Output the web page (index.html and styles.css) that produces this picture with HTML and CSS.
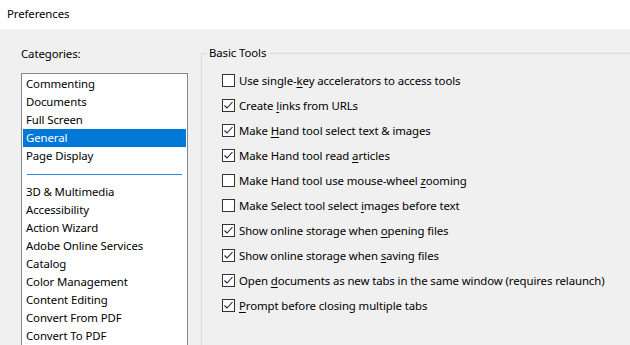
FILE: index.html
```html
<!DOCTYPE html>
<html>
<head>
<meta charset="utf-8">
<link rel="stylesheet" href="styles.css">
</head>
<body>
<div class="titlebar">Preferences</div>
<div class="content">
  <div class="left">
    <div class="cat-label">Categories:</div>
    <div class="list">
      <div class="item">Commenting</div>
      <div class="item">Documents</div>
      <div class="item">Full Screen</div>
      <div class="item selected">General</div>
      <div class="item">Page Display</div>
      <div class="sep"><div class="sep-line"></div></div>
      <div class="item">3D &amp; Multimedia</div>
      <div class="item">Accessibility</div>
      <div class="item">Action Wizard</div>
      <div class="item">Adobe Online Services</div>
      <div class="item">Catalog</div>
      <div class="item">Color Management</div>
      <div class="item">Content Editing</div>
      <div class="item">Convert From PDF</div>
      <div class="item">Convert To PDF</div>
    </div>
  </div>
  <fieldset class="group">
    <legend class="group-title">Basic Tools</legend>
    <div class="row"><span class="cb"></span><span class="lbl">Use single-<u>k</u>ey accelerators to access tools</span></div>
    <div class="row"><span class="cb checked"><svg viewBox="0 0 13 13" width="13" height="13"><path d="M2.5 6.5 L5 9 L10.5 3" fill="none" stroke="#222" stroke-width="1.1"/></svg></span><span class="lbl">Create <u>l</u>inks from URLs</span></div>
    <div class="row"><span class="cb checked"><svg viewBox="0 0 13 13" width="13" height="13"><path d="M2.5 6.5 L5 9 L10.5 3" fill="none" stroke="#222" stroke-width="1.1"/></svg></span><span class="lbl">Make <u>H</u>and tool select text &amp; images</span></div>
    <div class="row"><span class="cb checked"><svg viewBox="0 0 13 13" width="13" height="13"><path d="M2.5 6.5 L5 9 L10.5 3" fill="none" stroke="#222" stroke-width="1.1"/></svg></span><span class="lbl">Make Hand tool read <u>a</u>rticles</span></div>
    <div class="row"><span class="cb"></span><span class="lbl">Make Hand tool use mouse-wheel <u>z</u>ooming</span></div>
    <div class="row"><span class="cb"></span><span class="lbl">Make Select tool select <u>i</u>mages before text</span></div>
    <div class="row"><span class="cb checked"><svg viewBox="0 0 13 13" width="13" height="13"><path d="M2.5 6.5 L5 9 L10.5 3" fill="none" stroke="#222" stroke-width="1.1"/></svg></span><span class="lbl">Show online storage when <u>o</u>pening files</span></div>
    <div class="row"><span class="cb checked"><svg viewBox="0 0 13 13" width="13" height="13"><path d="M2.5 6.5 L5 9 L10.5 3" fill="none" stroke="#222" stroke-width="1.1"/></svg></span><span class="lbl">Show online storage when <u>s</u>aving files</span></div>
    <div class="row"><span class="cb checked"><svg viewBox="0 0 13 13" width="13" height="13"><path d="M2.5 6.5 L5 9 L10.5 3" fill="none" stroke="#222" stroke-width="1.1"/></svg></span><span class="lbl">Open <u>d</u>ocuments as new tabs in the same window (requires relaunch)</span></div>
    <div class="row"><span class="cb checked"><svg viewBox="0 0 13 13" width="13" height="13"><path d="M2.5 6.5 L5 9 L10.5 3" fill="none" stroke="#222" stroke-width="1.1"/></svg></span><span class="lbl"><u>P</u>rompt before closing multiple tabs</span></div>
  </fieldset>
</div>
</body>
</html>
```
FILE: styles.css
```css
html, body {
  margin: 0;
  padding: 0;
}
body {
  width: 630px;
  height: 345px;
  overflow: hidden;
  background: #f0f0f0;
  font-family: "Noto Sans", "Open Sans", sans-serif;
  font-size: 11.4px;
  letter-spacing: -0.1px;
  color: #000;
}
.titlebar {
  height: 29px;
  line-height: 28px;
  background: #fff;
  padding-left: 7px;
}
.content {
  display: flex;
  align-items: flex-start;
  padding-left: 21px;
  height: 316px;
  overflow: hidden;
}
.left {
  width: 167px;
  flex: none;
}
.cat-label {
  height: 16px;
  line-height: 16px;
  margin-top: 17px;
  margin-bottom: 11px;
}
.list {
  background: #fff;
  border: 1px solid #828790;
  padding: 1px 1px 0;
  height: 300px;
}
.item {
  height: 18px;
  line-height: 18px;
  padding-left: 3px;
  white-space: nowrap;
}
.item.selected {
  background: #0078d7;
  color: #fff;
}
.sep {
  height: 18px;
  display: flex;
  align-items: center;
  padding: 0 4px 0 4px;
}
.sep-line {
  flex: 1;
  height: 1px;
  background: #2b86d4;
}
.group {
  margin: 16px 0 0 13px;
  padding: 7px 0 0 20px;
  border: 1px solid #dcdcdc;
  border-right: none;
  min-width: 0;
  flex: 1;
  height: 320px;
}
.group-title {
  padding: 0 2px;
  margin-left: -15px;
  line-height: 16px;
}
.row {
  height: 25px;
  display: flex;
  align-items: center;
  white-space: nowrap;
}
.cb {
  width: 13px;
  height: 13px;
  box-sizing: border-box;
  border: 1px solid #333;
  background: #fff;
  flex: none;
}
.cb svg {
  display: block;
  margin: -1px;
}
.lbl {
  margin-left: 4px;
}
u {
  text-decoration-thickness: 1px;
  text-underline-offset: 2px;
}
```
